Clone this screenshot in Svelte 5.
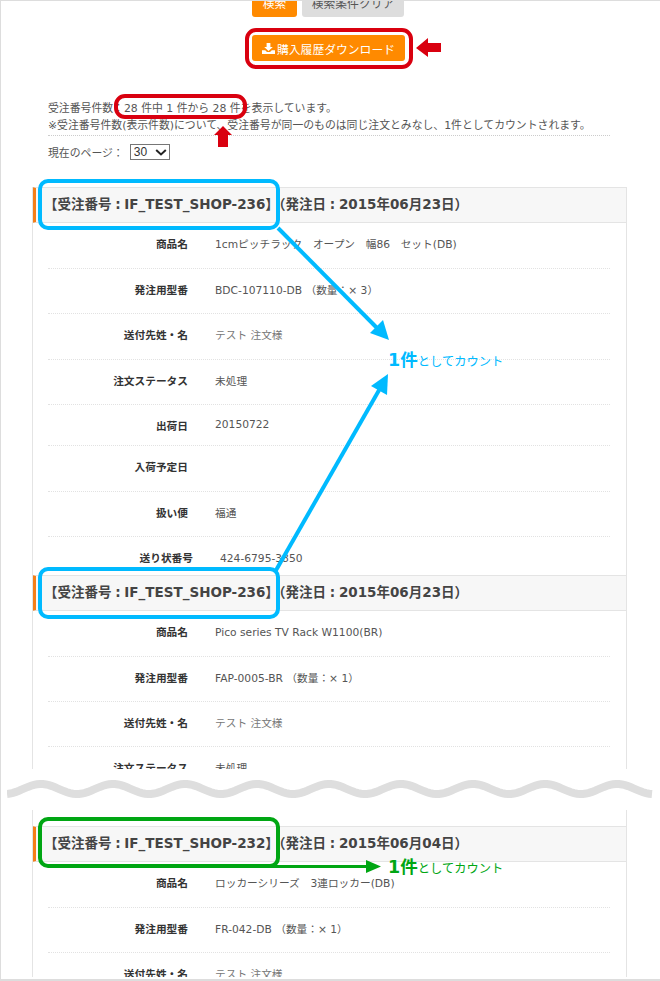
<script>
	const card1 = [
		{ label: '商品名', value: '1cmピッチラック　オープン　幅86　セット(DB)', h: 'h46' },
		{ label: '発注用型番', value: 'BDC-107110-DB （数量：× 3）', h: 'h45' },
		{ label: '送付先姓・名', value: 'テスト 注文様', h: 'h46', muted: true },
		{ label: '注文ステータス', value: '未処理', h: 'h45' },
		{ label: '出荷日', value: '20150722', h: 'h41', raised: true },
		{ label: '入荷予定日', value: '', h: 'h46' },
		{ label: '扱い便', value: '福通', h: 'h45' },
		{ label: '送り状番号', value: '424-6795-3850', h: 'h45', shifted: true }
	];
	const card2 = [
		{ label: '商品名', value: 'Pico series TV Rack W1100(BR)', h: 'h46' },
		{ label: '発注用型番', value: 'FAP-0005-BR （数量：× 1）', h: 'h45' },
		{ label: '送付先姓・名', value: 'テスト 注文様', h: 'h45', muted: true },
		{ label: '注文ステータス', value: '未処理', h: 'h45' }
	];
	const card3 = [
		{ label: '商品名', value: 'ロッカーシリーズ　3連ロッカー(DB)', h: 'h46' },
		{ label: '発注用型番', value: 'FR-042-DB （数量：× 1）', h: 'h45' },
		{ label: '送付先姓・名', value: 'テスト 注文様', h: 'h45', muted: true }
	];
	const cards = [
		{ no: '236', date: '2015年06月23日', rows: card1, cls: 'first' },
		{ no: '236', date: '2015年06月23日', rows: card2, cls: 'second' },
		{ no: '232', date: '2015年06月04日', rows: card3, cls: 'third' }
	];

	// wave of the cut mark, crest every 72px
	let wave = '';
	for (let x = 0; x <= 646; x += 3) {
		const y = 12 + 5 * Math.cos((2 * Math.PI * (x + 2)) / 72);
		wave += (x === 0 ? 'M' : 'L') + x + ' ' + y.toFixed(2) + ' ';
	}
</script>

<div class="page">
	<div class="frame">
		<div class="toolbar">
			<button class="btn orange search">検索</button>
			<button class="btn grey">検索条件クリア</button>
		</div>
		<div class="download-row">
			<button class="btn orange download">
				<svg width="13" height="11" viewBox="0 0 13 11">
					<path d="M4.6 0h3.8v4h2.4L6.5 8 2.2 4h2.4z" fill="#fff" />
					<path d="M0 7.2h3.2L5 9h3l1.8-1.8H13V11H0z" fill="#fff" />
				</svg>
				購入履歴ダウンロード
			</button>
		</div>

		<div class="info">
			<p>受注番号件数：28 件中 1 件から 28 件を表示しています。</p>
			<p>※受注番号件数(表示件数)について、受注番号が同一のものは同じ注文とみなし、1件としてカウントされます。</p>
		</div>
		<div class="pager">
			<span>現在のページ：</span>
			<span class="select-wrap">
				<select><option>30</option></select>
				<svg width="12" height="7" viewBox="0 0 12 7">
					<path d="M1.2 1l4.8 4.4L10.8 1" fill="none" stroke="#222" stroke-width="2" />
				</svg>
			</span>
		</div>

		{#each cards as card, i}
			{#if i === 2}
				<div class="cut">
					<svg width="646" height="24" viewBox="0 0 646 24">
						<path d={wave} fill="none" stroke="#dedede" stroke-width="8" />
					</svg>
				</div>
			{/if}
			<section class="card {card.cls}">
				<h2>【受注番号 : IF_TEST_SHOP-{card.no}】（発注日 : {card.date}）</h2>
				{#each card.rows as row}
					<div class="row {row.h}">
						<div class="label" class:shifted={row.shifted}>{row.label}</div>
						<div class="value" class:muted={row.muted} class:raised={row.raised}>{row.value}</div>
					</div>
				{/each}
			</section>
		{/each}
	</div>

	<svg class="marks" width="660" height="981" viewBox="0 0 660 981">
		<g fill="none" stroke-width="4">
			<rect x="247" y="30" width="164" height="37" rx="9" stroke="#d9000f" />
			<rect x="116" y="96" width="129" height="21" rx="9" stroke="#d9000f" />
			<rect x="40" y="181" width="238" height="47" rx="8" stroke="#00baff" />
			<rect x="40" y="569" width="238" height="48" rx="8" stroke="#00baff" />
			<rect x="40" y="819" width="238" height="47" rx="8" stroke="#00a613" />
		</g>
		<path d="M416 48l12-10v5h13v9h-13v5z" fill="#d9000f" />
		<path d="M223 126l9 9h-4v12h-10v-12h-4z" fill="#d9000f" />
		<g stroke="#00baff" stroke-width="4">
			<line x1="278" y1="228" x2="380" y2="331" />
			<line x1="275" y1="572" x2="382" y2="385" />
		</g>
		<path d="M389 340l-19-7 13-13z" fill="#00baff" />
		<path d="M388 374l-1 21-16-9z" fill="#00baff" />
		<line x1="262" y1="866.5" x2="368" y2="866.5" stroke="#00a613" stroke-width="3" />
		<path d="M381 866.5l-15 6.5v-13z" fill="#00a613" />
	</svg>
	<div class="count blue"><b>1件</b>としてカウント</div>
	<div class="count green"><b>1件</b>としてカウント</div>
</div>

<style>
	:global(body) {
		margin: 0;
		background: #fff;
	}

	.page {
		position: relative;
		width: 660px;
		height: 981px;
		overflow: hidden;
		font-family: 'DejaVu Sans', 'Noto Sans CJK JP', sans-serif;
		font-size: 10.85px;
		color: #555;
	}

	.frame {
		box-sizing: border-box;
		height: 981px;
		overflow: hidden;
		border-left: 1px solid #ddd;
		border-top: 1px solid #ddd;
		border-bottom: 2px solid #ddd;
	}

	.toolbar {
		display: flex;
		gap: 5px;
		margin: -10px 0 0 251px;
	}

	.btn {
		box-sizing: border-box;
		display: flex;
		align-items: center;
		justify-content: center;
		height: 26px;
		padding: 0;
		border: 0;
		border-radius: 3px;
		font: inherit;
		font-size: 11.8px;
	}

	.orange {
		background: #ff8a00;
		color: #fff;
	}

	.grey {
		width: 102px;
		background: #ddd;
		color: #555;
	}

	.toolbar .btn {
		padding-bottom: 4px;
	}

	.search {
		width: 45px;
	}

	.download-row {
		margin: 18px 0 0 251px;
	}

	.download {
		gap: 2px;
		width: 153px;
	}

	.info {
		width: 562px;
		margin: 39px 0 0 47px;
		padding-bottom: 1px;
		border-bottom: 1px dotted #ccc;
	}

	.info p {
		margin: 0;
		line-height: 17px;
		white-space: nowrap;
	}

	.pager {
		display: flex;
		align-items: center;
		gap: 6px;
		height: 16px;
		margin: 8px 0 0 47px;
	}

	.select-wrap {
		position: relative;
		display: block;
		height: 16px;
	}

	.select-wrap svg {
		position: absolute;
		top: 5px;
		right: 3px;
	}

	select {
		appearance: none;
		box-sizing: border-box;
		display: block;
		width: 40px;
		height: 16px;
		padding: 0 0 0 3px;
		border: 1px solid #767676;
		border-radius: 0;
		background: #fff;
		color: #333;
		font-family: 'Liberation Sans', sans-serif;
		font-size: 12px;
	}

	.card {
		box-sizing: border-box;
		width: 595px;
		margin-left: 31px;
		overflow: hidden;
		border-left: 1px solid #e4e4e4;
		border-right: 1px solid #e4e4e4;
	}

	.first {
		height: 388px;
		margin-top: 27px;
	}

	.second {
		height: 194px;
	}

	.third {
		height: 167px;
		padding-top: 16px;
	}

	.cut {
		display: flex;
		align-items: center;
		height: 41px;
		padding-left: 6px;
	}

	.cut svg {
		display: block;
		margin-top: -2px;
	}

	h2 {
		box-sizing: border-box;
		height: 36px;
		margin: 0 0 0 -1px;
		padding-left: 8px;
		border-left: 4px solid #f57f17;
		border-top: 1px solid #e4e4e4;
		border-bottom: 1px solid #e4e4e4;
		background: #f7f7f7;
		color: #444;
		font-size: 13.5px;
		font-weight: 700;
		line-height: 32px;
		word-spacing: -1px;
		white-space: nowrap;
	}

	.row {
		box-sizing: border-box;
		display: flex;
		gap: 27px;
		margin: 0 16px 0 15px;
		padding-top: 13px;
		border-bottom: 1px dotted #e2e2e2;
		font-size: 10.7px;
		line-height: 17px;
		white-space: nowrap;
	}

	.h46 {
		height: 46px;
	}

	.h45 {
		height: 45px;
	}

	.h41 {
		height: 41px;
	}

	.label {
		width: 140px;
		color: #333;
		font-weight: 700;
		text-align: right;
	}

	.value {
		color: #555;
	}

	.label.shifted {
		width: 145px;
	}

	.muted {
		color: #777;
	}

	.raised {
		margin-top: -2px;
	}

	.marks {
		position: absolute;
		top: 0;
		left: 0;
	}

	.count {
		position: absolute;
		left: 388px;
		font-size: 12.3px;
		line-height: 24px;
		white-space: nowrap;
	}

	.count b {
		font-size: 17.5px;
	}

	.blue {
		top: 348px;
		color: #00baff;
	}

	.green {
		top: 855px;
		color: #00a613;
	}
</style>
